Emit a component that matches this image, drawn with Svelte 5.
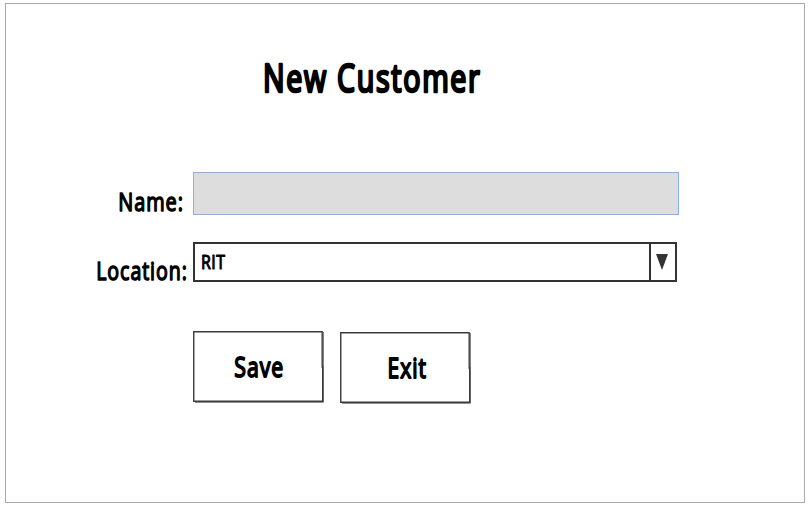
<script>
  const condense = 0.78;
  const buttons = [
    { label: 'Save', width: 50, offset: 0, x: 41.3, y: 46 },
    { label: 'Exit', width: 39.5, offset: 1, x: 47.5, y: 45.5 }
  ];
</script>

{#snippet lettering(text, width, size, x, y, stroke, spacing)}
  <text transform="translate({x} {y}) scale({condense} 1)" font-size={size} stroke-width={stroke} letter-spacing={spacing} textLength={width / condense} lengthAdjust="spacingAndGlyphs">{text}</text>
{/snippet}

<main>
  <h1><svg width="230" height="50">{@render lettering('New Customer', 218.5, 38, 8, 38, 2.7, 2.2)}</svg></h1>
  <form onsubmit={(e) => e.preventDefault()}>
    <div class="row name">
      <div class="label"><svg width="110" height="42">{@render lettering('Name:', 65.5, 26, 35.3, 39.3, 1.5, 1.2)}</svg></div>
      <div class="field"></div>
    </div>
    <div class="row location">
      <div class="label"><svg width="110" height="42">{@render lettering('Location:', 91.5, 26, 13.2, 38.3, 1.5, 1.2)}</svg></div>
      <div class="select">
        <svg width="60" height="36">{@render lettering('RIT', 24.5, 19.5, 6, 24.5, 1.1, 0.6)}</svg>
        <span class="arrow"><svg width="14" height="18"><path d="M1 1H13L7 17Z" fill="#333" /></svg></span>
      </div>
    </div>
    <div class="actions">
      {#each buttons as b}
        <button type="button" style:margin-top="{b.offset}px">
          <svg width="132" height="73">
            <path d="M2 71.3H130.4V1" stroke="#777" stroke-width="1" fill="none" />
            <path d="M.75 .75H129.2V36H129.7V70.3H.75Z" fill="#fff" stroke="#3b3b3b" stroke-width="1.4" />
            {@render lettering(b.label, b.width, 27.5, b.x, b.y, 1.8, 1.3)}
          </svg>
        </button>
      {/each}
    </div>
  </form>
</main>

<style>
  :global(body) { background: #fff; }
  main {
    box-sizing: border-box;
    width: 800px;
    height: 500px;
    margin: 3px 0 0 5px;
    border: 1px solid #aaa;
    overflow: hidden;
    display: flow-root;
  }
  svg { display: block; overflow: visible; }
  text {
    font-family: "Open Sans", "Noto Sans", sans-serif;
    font-weight: 500;
    font-variant-ligatures: none;
    fill: #000;
    stroke: #000;
    stroke-linejoin: round;
  }
  h1 { margin: 50px 0 0 249px; height: 50px; }
  form { margin-top: 68px; }
  .row { display: flex; margin-left: 77px; }
  .label { width: 110px; }
  .name { height: 43px; }
  .field {
    box-sizing: border-box;
    width: 486px;
    height: 43px;
    background: #ddd;
    border: 1px solid #8aabf5;
  }
  .location { margin-top: 27px; height: 40px; }
  .select {
    box-sizing: border-box;
    display: flex;
    justify-content: space-between;
    width: 484px;
    height: 40px;
    border: 2px solid #333;
  }
  .arrow {
    box-sizing: border-box;
    width: 26px;
    border-left: 2px solid #333;
    padding: 9px 0 0 4px;
  }
  .actions { display: flex; gap: 15px; margin: 49px 0 0 187px; }
  button { width: 132px; height: 73px; padding: 0; border: 0; background: none; }
</style>
